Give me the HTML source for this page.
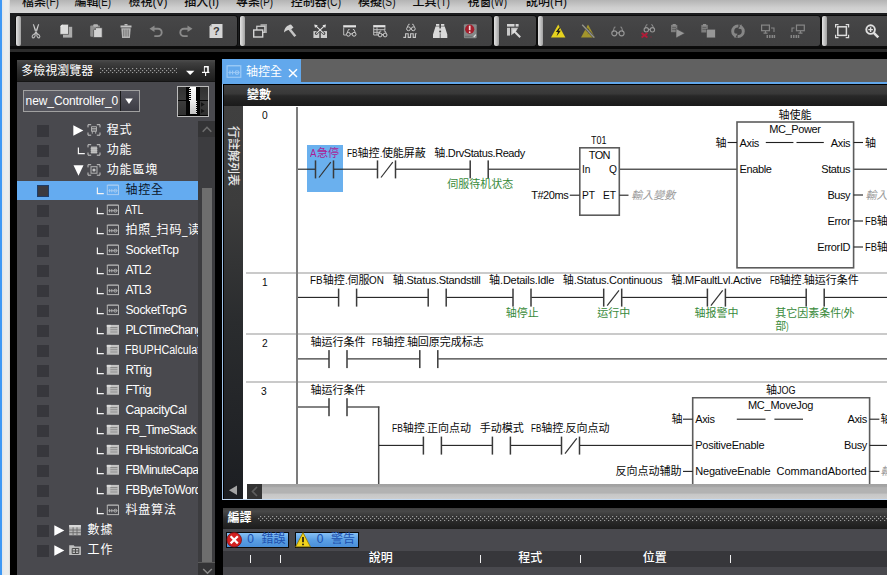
<!DOCTYPE html>
<html lang="zh-Hant"><head><meta charset="utf-8"><title>Sysmac Studio</title>
<style>
html,body{margin:0;padding:0}
body{width:887px;height:575px;overflow:hidden;position:relative;background:#000;font-family:"Liberation Sans","Noto Sans CJK TC","Noto Sans CJK SC",sans-serif;}
#r{position:absolute;left:0;top:0;width:887px;height:575px;overflow:hidden}
#r div{position:absolute;box-sizing:border-box}
.t{white-space:nowrap}
.c2{font-weight:500}.c3{font-weight:bold}
.x{display:inline-block;transform-origin:0 50%;white-space:nowrap;position:relative}
#ov{position:absolute;left:0;top:0}
</style></head><body>
<div id="r">
<div style="left:0px;top:0px;width:2.2px;height:575px;background:#3d98f4;"></div>
<div style="left:2.2px;top:0px;width:7.8px;height:575px;background:linear-gradient(90deg,#dfe6ec,#e9ecec 30%,#ebeded 80%,#d8dada);"></div>
<div style="left:10px;top:0px;width:877px;height:13px;background:linear-gradient(#b4b4b4,#cfcfcf 60%,#d6d6d6);"></div>
<div style="left:10px;top:13px;width:877px;height:47px;background:#1b1c1e;"></div>
<div style="left:10px;top:46px;width:877px;height:3px;background:#0a0a0a;"></div>
<div style="left:10px;top:49px;width:877px;height:3px;background:#2b2b2b;"></div>
<div style="left:10px;top:52px;width:877px;height:8px;background:#000;"></div>
<div style="left:10px;top:60px;width:7px;height:515px;background:#000;"></div>
<div style="left:16px;top:16px;width:221px;height:30px;background:linear-gradient(#474748,#424243 50%,#404041);border-radius:3px;box-shadow:0 0 0 1px #0c0c0c;"></div>
<div style="left:16px;top:16.2px;width:5.2px;height:29.6px;background:linear-gradient(90deg,#e2e2e2,#c4c4c4 50%,#a0a0a0);border-radius:2px;"></div>
<div style="left:240px;top:16px;width:252px;height:30px;background:linear-gradient(#474748,#424243 50%,#404041);border-radius:3px;box-shadow:0 0 0 1px #0c0c0c;"></div>
<div style="left:240px;top:16.2px;width:5.2px;height:29.6px;background:linear-gradient(90deg,#e2e2e2,#c4c4c4 50%,#a0a0a0);border-radius:2px;"></div>
<div style="left:494px;top:16px;width:42px;height:30px;background:linear-gradient(#474748,#424243 50%,#404041);border-radius:3px;box-shadow:0 0 0 1px #0c0c0c;"></div>
<div style="left:494px;top:16.2px;width:5.2px;height:29.6px;background:linear-gradient(90deg,#e2e2e2,#c4c4c4 50%,#a0a0a0);border-radius:2px;"></div>
<div style="left:538px;top:16px;width:282px;height:30px;background:linear-gradient(#474748,#424243 50%,#404041);border-radius:3px;box-shadow:0 0 0 1px #0c0c0c;"></div>
<div style="left:538px;top:16.2px;width:5.2px;height:29.6px;background:linear-gradient(90deg,#e2e2e2,#c4c4c4 50%,#a0a0a0);border-radius:2px;"></div>
<div style="left:822px;top:16px;width:80px;height:30px;background:linear-gradient(#474748,#424243 50%,#404041);border-radius:3px;box-shadow:0 0 0 1px #0c0c0c;"></div>
<div style="left:822px;top:16.2px;width:5.2px;height:29.6px;background:linear-gradient(90deg,#e2e2e2,#c4c4c4 50%,#a0a0a0);border-radius:2px;"></div>
<div style="left:17px;top:60px;width:198px;height:515px;background:#49494e;"></div>
<div style="left:17px;top:60px;width:198px;height:21px;background:linear-gradient(#4c4c4c,#3e3e3e 15%,#2e2e2e 50%,#1e1e1e);"></div>
<div style="left:17px;top:80.6px;width:198px;height:1.7px;background:#151515;"></div>
<div style="left:22.5px;top:90px;width:117px;height:22px;background:linear-gradient(#5c5c64,#54545c);border:1px solid #a0a0a0;"></div>
<div style="left:119.5px;top:91px;width:19.5px;height:20px;background:linear-gradient(#56565f,#3c3c44);border-left:1px solid #1a1a1a;"></div>
<div style="left:176.8px;top:85.8px;width:32.4px;height:31.2px;background:#050505;border:1px solid #bcbcbc;"></div>
<div style="left:178.2px;top:87.2px;width:8px;height:12.6px;background:linear-gradient(#303030,#3c3c3c);"></div>
<div style="left:178.2px;top:100.8px;width:8px;height:14px;background:linear-gradient(#3c3c3c,#303030);"></div>
<div style="left:199.9px;top:87.2px;width:8px;height:12.6px;background:linear-gradient(#303030,#3c3c3c);"></div>
<div style="left:199.9px;top:100.8px;width:8px;height:14px;background:linear-gradient(#3c3c3c,#303030);"></div>
<div style="left:190.4px;top:87px;width:5.2px;height:27.3px;background:linear-gradient(#ffffff,#ececec 55%,#c4c4c4);"></div>
<div style="left:189px;top:88px;width:1.6px;height:12.5px;background:repeating-linear-gradient(#f0f0f0 0 1px,#050505 1px 2px);"></div>
<div style="left:195.5px;top:101px;width:1.4px;height:12.5px;background:repeating-linear-gradient(#e0e0e0 0 1px,#050505 1px 2px);"></div>
<div style="left:17px;top:181px;width:181px;height:19px;background:#64abf0;"></div>
<div style="left:37px;top:125px;width:12px;height:12px;background:#37373c;"></div>
<div style="left:37px;top:145px;width:12px;height:12px;background:#37373c;"></div>
<div style="left:37px;top:165px;width:12px;height:12px;background:#37373c;"></div>
<div style="left:37px;top:185px;width:12px;height:12px;background:#3c3a3e;border:1px solid #1d3d6a;"></div>
<div style="left:37px;top:205px;width:12px;height:12px;background:#37373c;"></div>
<div style="left:37px;top:225px;width:12px;height:12px;background:#37373c;"></div>
<div style="left:37px;top:245px;width:12px;height:12px;background:#37373c;"></div>
<div style="left:37px;top:265px;width:12px;height:12px;background:#37373c;"></div>
<div style="left:37px;top:285px;width:12px;height:12px;background:#37373c;"></div>
<div style="left:37px;top:305px;width:12px;height:12px;background:#37373c;"></div>
<div style="left:37px;top:325px;width:12px;height:12px;background:#37373c;"></div>
<div style="left:37px;top:345px;width:12px;height:12px;background:#37373c;"></div>
<div style="left:37px;top:365px;width:12px;height:12px;background:#37373c;"></div>
<div style="left:37px;top:385px;width:12px;height:12px;background:#37373c;"></div>
<div style="left:37px;top:405px;width:12px;height:12px;background:#37373c;"></div>
<div style="left:37px;top:425px;width:12px;height:12px;background:#37373c;"></div>
<div style="left:37px;top:445px;width:12px;height:12px;background:#37373c;"></div>
<div style="left:37px;top:465px;width:12px;height:12px;background:#37373c;"></div>
<div style="left:37px;top:485px;width:12px;height:12px;background:#37373c;"></div>
<div style="left:37px;top:505px;width:12px;height:12px;background:#37373c;"></div>
<div style="left:37px;top:525px;width:12px;height:12px;background:#37373c;"></div>
<div style="left:37px;top:545px;width:12px;height:12px;background:#37373c;"></div>
<div style="left:198px;top:121px;width:17px;height:454px;background:#3c3c3f;"></div>
<div style="left:198px;top:121px;width:17px;height:16px;background:#343436;"></div>
<div style="left:198px;top:562px;width:17px;height:13px;background:#343436;"></div>
<div style="left:198px;top:562px;width:17px;height:1px;background:#5a5a5a;"></div>
<div style="left:202.3px;top:188px;width:9.5px;height:373.5px;background:#6e6e6e;"></div>
<div style="left:215px;top:60px;width:7px;height:515px;background:#000;"></div>
<div style="left:222px;top:59.4px;width:665px;height:23px;background:#616161;"></div>
<div style="left:222px;top:59.4px;width:79px;height:23.6px;background:#62a8ec;"></div>
<div style="left:222px;top:82px;width:665px;height:2.2px;background:#62a8ec;"></div>
<div style="left:222px;top:84px;width:665px;height:416px;background:#000;"></div>
<div style="left:222px;top:84px;width:1px;height:416px;background:#9fc3ea;"></div>
<div style="left:222px;top:498.8px;width:665px;height:1.6px;background:#c4daf2;"></div>
<div style="left:224px;top:85.3px;width:663px;height:20.7px;background:linear-gradient(#424242,#383838 42%,#282828 52%,#1a1a1a);"></div>
<div style="left:224px;top:106px;width:18.5px;height:393px;background:linear-gradient(#404040,#3c3c3c 25%,#2a2c2e 55%,#1c1e22);"></div>
<div style="left:242.5px;top:106px;width:644.5px;height:393px;background:#ffffff;"></div>
<div style="left:242.5px;top:484px;width:4.5px;height:15px;background:#fff;"></div>
<div style="left:247px;top:484px;width:640px;height:15px;background:linear-gradient(#a0a0a0,#a6a6a6 18%,#b2b2b2 25%,#b2b2b2 60%,#c6c6c6 68%,#cecece);"></div>
<div style="left:247px;top:484px;width:15px;height:15px;background:#333333;"></div>
<div style="left:246px;top:272.1px;width:641px;height:2px;background:#cacaca;"></div>
<div style="left:246px;top:333px;width:641px;height:2px;background:#cacaca;"></div>
<div style="left:246px;top:381px;width:641px;height:2px;background:#cacaca;"></div>
<div style="left:296.2px;top:107px;width:2px;height:377px;background:#7c7c7c;"></div>
<div style="left:307px;top:145px;width:36px;height:47px;background:#6ab0ee;"></div>
<div style="left:223px;top:508px;width:664px;height:67px;background:#49494e;"></div>
<div style="left:223px;top:508px;width:664px;height:20.5px;background:linear-gradient(#3c3c3c,#484848 15%,#2e2e2e 50%,#1c1c1c);"></div>
<div style="left:223px;top:551px;width:664px;height:16.2px;background:#37373b;"></div>
<div style="left:226px;top:532px;width:63px;height:16px;background:linear-gradient(#86c0f4,#5a9fe4 50%,#4a8fda);border:1px solid #0a0a0a;"></div>
<div style="left:295px;top:532px;width:64px;height:16px;background:linear-gradient(#86c0f4,#5a9fe4 50%,#4a8fda);border:1px solid #0a0a0a;"></div>
<div style="left:249.7px;top:554.5px;width:1.3px;height:8.5px;background:#f0f0f0;"></div>
<div style="left:279.6px;top:554.5px;width:1.3px;height:8.5px;background:#f0f0f0;"></div>
<div style="left:479.6px;top:554.5px;width:1.3px;height:8.5px;background:#f0f0f0;"></div>
<div style="left:579.7px;top:554.5px;width:1.3px;height:8.5px;background:#f0f0f0;"></div>
<div style="left:729.6px;top:554.5px;width:1.3px;height:8.5px;background:#f0f0f0;"></div>
<svg id="ov" width="887" height="575" viewBox="0 0 887 575" fill="none"><path d="M201 102.2L204.8 104.5L201 106.8ZM201 108.8L204.8 111L201 113.2Z" fill="#141414"/>
<defs><pattern id="dots" width="4" height="4" patternUnits="userSpaceOnUse"><rect x="0" y="0" width="1.2" height="1.2" fill="#9c9c9c"/><rect x="2" y="2" width="1.2" height="1.2" fill="#9c9c9c"/></pattern></defs>
<rect x="100" y="68" width="77" height="5.2" fill="url(#dots)"/>
<rect x="258" y="516" width="629" height="5.2" fill="url(#dots)"/>
<g transform="translate(32 24)" ><path d="M.8 0L2 .6L4.9 8.4L3.4 9Z M7.2 0L6 .6L3.1 8.4L4.6 9Z" fill="#cfcfcf"/><ellipse cx="1.7" cy="12" rx="1.25" ry="2" stroke="#b8b8b8" stroke-width="1.1" transform="rotate(32 1.7 12)"/><ellipse cx="6.3" cy="12" rx="1.25" ry="2" stroke="#b8b8b8" stroke-width="1.1" transform="rotate(-32 6.3 12)"/><path d="M4 8.2L2.7 10.2M4 8.2L5.3 10.2" stroke="#c0c0c0" stroke-width="1.5"/></g>
<g transform="translate(60 24.2)" ><rect x="3" y="2.6" width="9.2" height="10.8" fill="#acacac"/><path d="M0 2.4L2.4 0H8.5V10.2H0Z" fill="#dcdcdc" stroke="#434344" stroke-width=".7"/><path d="M0 2.4H2.4V0Z" fill="#f2f2f2"/></g>
<g transform="translate(90.2 24.2)" ><rect x="0" y="1.3" width="9.8" height="11.2" rx="1" fill="#909090"/><rect x="3" y="0" width="4.8" height="2.6" rx="1" fill="#b4b4b4"/><path d="M3.4 5.9L5.8 3.5H12V13.4H3.4Z" fill="#d2d2d2" stroke="#434344" stroke-width=".7"/><path d="M3.4 5.9H5.8V3.5Z" fill="#707070"/></g>
<g transform="translate(120.5 24)" ><rect x="4" y="0" width="3" height="1.5" fill="#bbb"/><rect x="0" y="1.5" width="11" height="2" fill="#c4c4c4"/><path d="M.8 4.2H10.2L9.4 14H1.6Z" fill="#b4b4b4"/><path d="M3.3 5.5V12.5M5.5 5.5V12.5M7.7 5.5V12.5" stroke="#6a6a6a" stroke-width=".9"/></g>
<g transform="translate(149.5 25.5)" ><path d="M0 3.2L5 0V6.4Z" fill="#8a8a8a"/><path d="M4.5 3.2H8.5A3.6 3.6 0 0 1 8.5 10.6H4.8" stroke="#8a8a8a" stroke-width="1.9"/></g>
<g transform="translate(179 25.5)" ><path d="M13.5 3.2L8.5 0V6.4Z" fill="#8a8a8a"/><path d="M9 3.2H5A3.6 3.6 0 0 0 5 10.6H8.7" stroke="#8a8a8a" stroke-width="1.9"/></g>
<g transform="translate(209.5 24)" ><path d="M0 2.5L2.5 0H13V14H0Z" fill="#d6d6d6"/><path d="M0 2.5H2.5V0" fill="#aaa"/></g>
<g transform="translate(253 24)" ><rect x="7.5" y="0" width="6.5" height="9" fill="#9a9a9a"/><rect x="3.8" y="2.3" width="8" height="6" fill="#434344" stroke="#c8c8c8" stroke-width="1.3"/><rect x=".7" y="6" width="9" height="7" fill="#434344" stroke="#d4d4d4" stroke-width="1.4"/></g>
<g transform="translate(283 24)" ><path d="M1 8.5C1.5 4 4 1.3 8 .6L10.5 3.5L7 6.2C5 5.6 3 6.5 1 8.5Z" fill="#d0d0d0"/><path d="M6.8 5.5L12.3 12.2" stroke="#c4c4c4" stroke-width="2.6"/></g>
<g transform="translate(313.4 24)" ><rect x="0" y="7.1" width="5.9" height="6.9" fill="#cdcdcd"/><rect x="7.4" y="7.1" width="6.2" height="6.9" fill="#cdcdcd"/><path d="M2.8 9.6L6.7 5.8M10.6 9.6L6.7 5.8" stroke="#434344" stroke-width="2.6"/><circle cx="2.8" cy="9.6" r="1.3" fill="#434344"/><circle cx="10.6" cy="9.6" r="1.3" fill="#434344"/><path d="M2.8 9.6L11 1.8M10.6 9.6L2.4 1.8" stroke="#e2e2e2" stroke-width="1.15"/><path d="M.8 .4L4.4 1.2L1.6 4Z M12.6 .4L9 1.2L11.8 4Z" fill="#e2e2e2"/></g>
<g transform="translate(343 24)" ><rect x=".2" y="1.2" width="12.8" height="2.2" fill="#e2e2e2"/><path d="M.7 3.4V11H3.4" stroke="#bcbcbc" stroke-width="1"/><circle cx="5.4" cy="10.3" r="1.9" stroke="#d0d0d0" stroke-width="1"/><circle cx="11.1" cy="10.3" r="1.9" stroke="#d0d0d0" stroke-width="1"/><path d="M7.3 9.9H9.2" stroke="#d0d0d0" stroke-width="1"/><path d="M4.2 8.7L5.5 5.5H6.6 M12.3 8.7L11 5.5H9.9" stroke="#d0d0d0" stroke-width=".9"/></g>
<g transform="translate(373 24)" ><rect x=".2" y="1.1" width="12.2" height="2.2" fill="#e2e2e2"/><path d="M.7 3.3V11H5M.7 5.7H12M.7 8.3H6.5M4 3.3V11M11.9 3.3V6.5" stroke="#bebebe" stroke-width="1"/><circle cx="7.1" cy="11" r="1.9" stroke="#d0d0d0" stroke-width="1"/><circle cx="12.1" cy="11" r="1.9" stroke="#d0d0d0" stroke-width="1"/><path d="M9 10.6H10.2" stroke="#d0d0d0" stroke-width="1"/><path d="M5.9 9.4L7.2 7H8.3 M13.3 9.4L12 7H10.9" stroke="#d0d0d0" stroke-width=".9"/></g>
<g transform="translate(403 24)" ><circle cx="5.5" cy="4.8" r="1.9" stroke="#c8c8c8" stroke-width="1"/><circle cx="10.3" cy="4.8" r="1.9" stroke="#c8c8c8" stroke-width="1"/><path d="M7.4 4.4H8.4" stroke="#c8c8c8" stroke-width="1"/><path d="M4.3 3.2L5.6 0.3H6.7 M11.5 3.2L10.2 0.3H9.1" stroke="#c8c8c8" stroke-width=".9"/><path d="M.3 13.4H2.6V9.7H5.2V13.4H7.6V9.7H10.2V13.4H12.4V9.7H13.6" stroke="#c8c8c8" stroke-width="1.1"/></g>
<g transform="translate(433 24)" ><path d="M3 0H6.3V2.2L6.8 9.4V14H0V10.4L2.6 2.2H3Z M11.3 0H8V2.2L7.5 9.4V14H14.3V10.4L11.7 2.2H11.3Z" fill="#d9d9d9"/><rect x="6" y="4.4" width="2.4" height="5" fill="#d2d2d2"/><circle cx="7.15" cy="7.6" r="1" fill="#3a3a3a"/><path d="M2.4 2.2H6.5M7.8 2.2H11.9" stroke="#434344" stroke-width=".55"/></g>
<g transform="translate(463.9 24.3)" ><rect x="0" y="0" width="12.8" height="14" rx="1" fill="#858888"/><circle cx="5.8" cy="4.9" r="4.6" fill="#a41e2c"/><path d="M5.8 1.4V5.9" stroke="#f2dede" stroke-width="1.7"/><circle cx="5.8" cy="7.9" r=".9" fill="#f2dede"/><path d="M1 12.2H8.6" stroke="#6e7474" stroke-width="1.3"/><path d="M9.8 12.8L12 10.4" stroke="#e4e4e4" stroke-width="1.1"/></g>
<g transform="translate(507 24)" ><rect x="0" y="0" width="7.5" height="2.6" fill="#d4d4d4"/><rect x="8.6" y="0" width="3" height="2.6" fill="#d4d4d4"/><rect x="0" y="3.8" width="3" height="7.8" fill="#c8c8c8"/><path d="M4.2 3.8H11.4L4.2 11.4Z" fill="#c4c4c4"/><path d="M7.5 7.5L13.2 13.2" stroke="#d8d8d8" stroke-width="2"/><path d="M5.5 10.5V5.5H10.5Z" fill="#e0e0e0"/></g>
<g transform="translate(551 24.5)" ><path d="M7.2 0L14.4 13H0Z" fill="#e6d21e"/><path d="M8.3 2.9L4.9 7.5H7L5.6 11.8L9.8 6.3H7.5L9.3 2.9Z" fill="#1a1a1a"/></g>
<g transform="translate(581 24.5)" ><path d="M7 0L14 13H0Z" fill="#a3952c"/><path d="M7.5 4L5.8 7.4H7.4L6.4 10.5L9 6.6H7.3L8.3 4Z" fill="#6c6424"/><path d="M1.2 .2L13.2 12.9" stroke="#434344" stroke-width="2.6"/><path d="M1.2 .2L13.2 12.9" stroke="#94948a" stroke-width="1.4"/></g>
<g transform="translate(611 25)" ><circle cx="3.3" cy="8.3" r="2.5" stroke="#969696" stroke-width="1.15"/><circle cx="10.6" cy="8.3" r="2.5" stroke="#969696" stroke-width="1.15"/><path d="M5.8 7.9H8.1" stroke="#969696" stroke-width="1.15"/><path d="M2.1 6.7L3.4 2.1H4.5 M11.8 6.7L10.5 2.1H9.4" stroke="#969696" stroke-width=".9"/></g>
<g transform="translate(641 24)" ><circle cx="5.3" cy="5.8" r="2.2" stroke="#969696" stroke-width="1.1"/><circle cx="11.4" cy="5.8" r="2.2" stroke="#969696" stroke-width="1.1"/><path d="M7.5 5.4H9.2" stroke="#969696" stroke-width="1.1"/><path d="M4.1 4.2L5.4 0.8H6.5 M12.6 4.2L11.3 0.8H10.2" stroke="#969696" stroke-width=".9"/><path d="M.6 8.9L6.4 13.6M6.4 8.9L.6 13.6" stroke="#b01c38" stroke-width="1.9"/><path d="M9.2 13H10.8" stroke="#7a3040" stroke-width="1"/></g>
<g transform="translate(671 24)" ><rect x="0" y=".9" width="6.3" height="7.3" fill="#7e7e7e"/><rect x="1.6" y="0" width="3.2" height="1.8" fill="#8e8e8e"/><path d="M1.2 3.5H5M1.2 5.5H5" stroke="#5c5c5c" stroke-width=".8"/><path d="M5 4.6L13.9 9.3L5 14Z" fill="#979797" stroke="#434344" stroke-width=".6"/></g>
<g transform="translate(701 24)" ><rect x=".3" y=".9" width="6.5" height="7.6" fill="#7e7e7e"/><rect x="2" y="0" width="3.2" height="1.8" fill="#8e8e8e"/><path d="M1.5 3.5H5.4M1.5 5.5H5.4" stroke="#5c5c5c" stroke-width=".8"/><rect x="5.5" y="5.2" width="8.8" height="8.7" fill="#979797" stroke="#434344" stroke-width=".6"/></g>
<g transform="translate(731 24.3)" ><circle cx="7" cy="6.9" r="5.3" stroke="#868686" stroke-width="3"/><path d="M7.6 -.6L10.2 3.6L7.2 4.6Z M6.4 14.4L3.8 10.2L6.8 9.2Z" fill="#434344"/><path d="M10.2 -.2L11.6 4.9L7.4 4.4Z M3.8 14L2.4 8.9L6.6 9.4Z" fill="#868686"/></g>
<g transform="translate(761 24.5)" ><rect x=".6" y=".6" width="7.8" height="5.6" stroke="#868686" stroke-width="1.2"/><path d="M2.5 8.6H6.5M4.5 6.5V8.6" stroke="#868686" stroke-width="1.2"/><path d="M10 3.5H13V7.5" stroke="#868686" stroke-width="1.1"/><path d="M6.3 10.4V13.5M8.8 10.4V13.5M11.3 10.4V13.5M13.4 10.4V13.5" stroke="#868686" stroke-width="1.5"/></g>
<g transform="translate(790.5 24.5)" ><rect x="6" y=".6" width="7.8" height="5.6" stroke="#868686" stroke-width="1.2"/><path d="M8 8.6H12M10 6.5V8.6" stroke="#868686" stroke-width="1.2"/><path d="M1.5 7.5V3.5H4" stroke="#868686" stroke-width="1.1"/><path d="M.8 10.4V13.5M3.3 10.4V13.5M5.8 10.4V13.5M8 10.4V13.5" stroke="#868686" stroke-width="1.5"/></g>
<g transform="translate(835 24)" ><rect x="2.8" y="2.8" width="8.6" height="8.6" stroke="#dcdcdc" stroke-width="1.5"/><path d="M.6 3.5V.6H3.5M10.7 .6H13.6V3.5M13.6 10.7V13.6H10.7M3.5 13.6H.6V10.7" stroke="#dcdcdc" stroke-width="1.2"/></g>
<g transform="translate(865 24)" ><circle cx="5.6" cy="5.6" r="4.3" stroke="#e0e0e0" stroke-width="1.9"/><path d="M3.3 5.6H7.9M5.6 3.3V7.9" stroke="#e0e0e0" stroke-width="1.4"/><path d="M8.8 8.8L13.3 13.3" stroke="#e0e0e0" stroke-width="2.6"/></g>
<path d="M186 70.8H194.4L190.2 75Z" fill="#fff"/>
<path d="M204 66.8H208V72" stroke="#fff" stroke-width="1.6"/><path d="M204.4 66.8V72" stroke="#fff" stroke-width=".9"/><path d="M202 72.4H209.4" stroke="#fff" stroke-width="1.2"/><path d="M205.6 73V76" stroke="#fff" stroke-width="1.1"/>
<path d="M125.2 98.6H132.8L129 104Z" fill="#fff"/>
<path d="M202.7 131.8L207 127.3L211.3 131.8" stroke="#6e6e6e" stroke-width="1.6"/>
<path d="M203.2 569L207.5 573.2L211.8 569" stroke="#8a8a8a" stroke-width="1.5"/>
<path d="M257 487L252.5 491.5L257 496" stroke="#5e5e5e" stroke-width="1.6"/>
<path d="M237 485.5V495L229 490.2Z" fill="#a4a4a4"/>
<path d="M73.3 125.2V135.8L83.3 130.5Z" fill="#fff"/>
<g transform="translate(88 124.2)" ><path d="M0 3.2V.5H3.2M8.8 .5H12V3.2M12 8.3V11H8.8M3.2 11H0V8.3" stroke="#c4c4c4" stroke-width="1"/><path d="M3.5 2.5H8.5V7.2H3.5ZM3.5 4.2H8.5M3.5 5.8H8.5M4.3 7.2V9.5M7.7 7.2V9.5" stroke="#b4b4b4" stroke-width=".9"/></g>
<path d="M78.4 147.4V153.7H84.8" stroke="#f4f4f4" stroke-width="1.2"/>
<g transform="translate(88 144.2)" ><path d="M0 3.2V.5H3.2M8.8 .5H12V3.2M12 8.3V11H8.8M3.2 11H0V8.3" stroke="#c4c4c4" stroke-width="1"/><rect x="3" y="2.3" width="6" height="7" fill="#aaa"/><path d="M2.5 4H9.5M2.5 6H9.5M2.5 8H9.5" stroke="#d4d4d4" stroke-width=".8"/></g>
<path d="M73.5 165.2H83.5L78.5 175.7Z" fill="#fff"/>
<g transform="translate(88 164.2)" ><path d="M0 3.2V.5H3.2M8.8 .5H12V3.2M12 8.3V11H8.8M3.2 11H0V8.3" stroke="#c4c4c4" stroke-width="1"/><rect x="3" y="2.5" width="6" height="6.5" stroke="#b4b4b4" stroke-width="1"/><circle cx="6" cy="5.8" r="1.6" fill="#c4c4c4"/></g>
<path d="M97.4 187.4V193.7H103.8" stroke="#f4f4f4" stroke-width="1.2"/>
<g transform="translate(106.8 184.7)" ><rect x=".5" y=".5" width="11.2" height="9.4" stroke="#a9cdf2" stroke-width="1"/><path d="M1 .3H11.2" stroke="#a9cdf2" stroke-width=".7"/><path d="M1.5 6H10.7" stroke="#a9cdf2" stroke-width=".8"/><path d="M2.8 4.4V7.6M5 4.4V7.6" stroke="#a9cdf2" stroke-width="1"/><circle cx="8.6" cy="6" r="1.5" fill="none" stroke="#a9cdf2" stroke-width=".9"/></g>
<path d="M97.4 207.4V213.7H103.8" stroke="#f4f4f4" stroke-width="1.2"/>
<g transform="translate(106.8 204.7)" ><rect x=".5" y=".5" width="11.2" height="9.4" stroke="#b4b4b4" stroke-width="1"/><path d="M1 .3H11.2" stroke="#b4b4b4" stroke-width=".7"/><path d="M1.5 6H10.7" stroke="#b4b4b4" stroke-width=".8"/><path d="M2.8 4.4V7.6M5 4.4V7.6" stroke="#b4b4b4" stroke-width="1"/><circle cx="8.6" cy="6" r="1.5" fill="none" stroke="#b4b4b4" stroke-width=".9"/></g>
<path d="M97.4 227.4V233.7H103.8" stroke="#f4f4f4" stroke-width="1.2"/>
<g transform="translate(106.8 224.7)" ><rect x=".5" y=".5" width="11.2" height="9.4" stroke="#b4b4b4" stroke-width="1"/><path d="M1 .3H11.2" stroke="#b4b4b4" stroke-width=".7"/><path d="M1.5 6H10.7" stroke="#b4b4b4" stroke-width=".8"/><path d="M2.8 4.4V7.6M5 4.4V7.6" stroke="#b4b4b4" stroke-width="1"/><circle cx="8.6" cy="6" r="1.5" fill="none" stroke="#b4b4b4" stroke-width=".9"/></g>
<path d="M97.4 247.4V253.7H103.8" stroke="#f4f4f4" stroke-width="1.2"/>
<g transform="translate(106.8 244.7)" ><rect x=".5" y=".5" width="11.2" height="9.4" stroke="#b4b4b4" stroke-width="1"/><path d="M1 .3H11.2" stroke="#b4b4b4" stroke-width=".7"/><path d="M1.5 6H10.7" stroke="#b4b4b4" stroke-width=".8"/><path d="M2.8 4.4V7.6M5 4.4V7.6" stroke="#b4b4b4" stroke-width="1"/><circle cx="8.6" cy="6" r="1.5" fill="none" stroke="#b4b4b4" stroke-width=".9"/></g>
<path d="M97.4 267.4V273.7H103.8" stroke="#f4f4f4" stroke-width="1.2"/>
<g transform="translate(106.8 264.7)" ><rect x=".5" y=".5" width="11.2" height="9.4" stroke="#b4b4b4" stroke-width="1"/><path d="M1 .3H11.2" stroke="#b4b4b4" stroke-width=".7"/><path d="M1.5 6H10.7" stroke="#b4b4b4" stroke-width=".8"/><path d="M2.8 4.4V7.6M5 4.4V7.6" stroke="#b4b4b4" stroke-width="1"/><circle cx="8.6" cy="6" r="1.5" fill="none" stroke="#b4b4b4" stroke-width=".9"/></g>
<path d="M97.4 287.4V293.7H103.8" stroke="#f4f4f4" stroke-width="1.2"/>
<g transform="translate(106.8 284.7)" ><rect x=".5" y=".5" width="11.2" height="9.4" stroke="#b4b4b4" stroke-width="1"/><path d="M1 .3H11.2" stroke="#b4b4b4" stroke-width=".7"/><path d="M1.5 6H10.7" stroke="#b4b4b4" stroke-width=".8"/><path d="M2.8 4.4V7.6M5 4.4V7.6" stroke="#b4b4b4" stroke-width="1"/><circle cx="8.6" cy="6" r="1.5" fill="none" stroke="#b4b4b4" stroke-width=".9"/></g>
<path d="M97.4 307.4V313.7H103.8" stroke="#f4f4f4" stroke-width="1.2"/>
<g transform="translate(106.8 304.7)" ><rect x=".5" y=".5" width="11.2" height="9.4" stroke="#b4b4b4" stroke-width="1"/><path d="M1 .3H11.2" stroke="#b4b4b4" stroke-width=".7"/><path d="M1.5 6H10.7" stroke="#b4b4b4" stroke-width=".8"/><path d="M2.8 4.4V7.6M5 4.4V7.6" stroke="#b4b4b4" stroke-width="1"/><circle cx="8.6" cy="6" r="1.5" fill="none" stroke="#b4b4b4" stroke-width=".9"/></g>
<path d="M97.4 327.4V333.7H103.8" stroke="#f4f4f4" stroke-width="1.2"/>
<g transform="translate(106.8 324.9)" ><rect x="0" y="0" width="12.2" height="10" fill="#c2c2c2"/><rect x="0" y="0" width="4" height="2" fill="#dcdcdc"/><path d="M3.5 2.7H10.7M3.5 4.9H10.7M3.5 7.1H10.7" stroke="#8a8a8a" stroke-width="1.1"/><path d="M0 9.5H12.2" stroke="#9a9a9a" stroke-width="1"/></g>
<path d="M97.4 347.4V353.7H103.8" stroke="#f4f4f4" stroke-width="1.2"/>
<g transform="translate(106.8 344.9)" ><rect x="0" y="0" width="12.2" height="10" fill="#c2c2c2"/><rect x="0" y="0" width="4" height="2" fill="#dcdcdc"/><path d="M3.5 2.7H10.7M3.5 4.9H10.7M3.5 7.1H10.7" stroke="#8a8a8a" stroke-width="1.1"/><path d="M0 9.5H12.2" stroke="#9a9a9a" stroke-width="1"/></g>
<path d="M97.4 367.4V373.7H103.8" stroke="#f4f4f4" stroke-width="1.2"/>
<g transform="translate(106.8 364.9)" ><rect x="0" y="0" width="12.2" height="10" fill="#c2c2c2"/><rect x="0" y="0" width="4" height="2" fill="#dcdcdc"/><path d="M3.5 2.7H10.7M3.5 4.9H10.7M3.5 7.1H10.7" stroke="#8a8a8a" stroke-width="1.1"/><path d="M0 9.5H12.2" stroke="#9a9a9a" stroke-width="1"/></g>
<path d="M97.4 387.4V393.7H103.8" stroke="#f4f4f4" stroke-width="1.2"/>
<g transform="translate(106.8 384.9)" ><rect x="0" y="0" width="12.2" height="10" fill="#c2c2c2"/><rect x="0" y="0" width="4" height="2" fill="#dcdcdc"/><path d="M3.5 2.7H10.7M3.5 4.9H10.7M3.5 7.1H10.7" stroke="#8a8a8a" stroke-width="1.1"/><path d="M0 9.5H12.2" stroke="#9a9a9a" stroke-width="1"/></g>
<path d="M97.4 407.4V413.7H103.8" stroke="#f4f4f4" stroke-width="1.2"/>
<g transform="translate(106.8 404.9)" ><rect x="0" y="0" width="12.2" height="10" fill="#c2c2c2"/><rect x="0" y="0" width="4" height="2" fill="#dcdcdc"/><path d="M3.5 2.7H10.7M3.5 4.9H10.7M3.5 7.1H10.7" stroke="#8a8a8a" stroke-width="1.1"/><path d="M0 9.5H12.2" stroke="#9a9a9a" stroke-width="1"/></g>
<path d="M97.4 427.4V433.7H103.8" stroke="#f4f4f4" stroke-width="1.2"/>
<g transform="translate(106.8 424.9)" ><rect x="0" y="0" width="12.2" height="10" fill="#c2c2c2"/><rect x="0" y="0" width="4" height="2" fill="#dcdcdc"/><path d="M3.5 2.7H10.7M3.5 4.9H10.7M3.5 7.1H10.7" stroke="#8a8a8a" stroke-width="1.1"/><path d="M0 9.5H12.2" stroke="#9a9a9a" stroke-width="1"/></g>
<path d="M97.4 447.4V453.7H103.8" stroke="#f4f4f4" stroke-width="1.2"/>
<g transform="translate(106.8 444.9)" ><rect x="0" y="0" width="12.2" height="10" fill="#c2c2c2"/><rect x="0" y="0" width="4" height="2" fill="#dcdcdc"/><path d="M3.5 2.7H10.7M3.5 4.9H10.7M3.5 7.1H10.7" stroke="#8a8a8a" stroke-width="1.1"/><path d="M0 9.5H12.2" stroke="#9a9a9a" stroke-width="1"/></g>
<path d="M97.4 467.4V473.7H103.8" stroke="#f4f4f4" stroke-width="1.2"/>
<g transform="translate(106.8 464.9)" ><rect x="0" y="0" width="12.2" height="10" fill="#c2c2c2"/><rect x="0" y="0" width="4" height="2" fill="#dcdcdc"/><path d="M3.5 2.7H10.7M3.5 4.9H10.7M3.5 7.1H10.7" stroke="#8a8a8a" stroke-width="1.1"/><path d="M0 9.5H12.2" stroke="#9a9a9a" stroke-width="1"/></g>
<path d="M97.4 487.4V493.7H103.8" stroke="#f4f4f4" stroke-width="1.2"/>
<g transform="translate(106.8 484.9)" ><rect x="0" y="0" width="12.2" height="10" fill="#c2c2c2"/><rect x="0" y="0" width="4" height="2" fill="#dcdcdc"/><path d="M3.5 2.7H10.7M3.5 4.9H10.7M3.5 7.1H10.7" stroke="#8a8a8a" stroke-width="1.1"/><path d="M0 9.5H12.2" stroke="#9a9a9a" stroke-width="1"/></g>
<path d="M97.4 507.4V513.7H103.8" stroke="#f4f4f4" stroke-width="1.2"/>
<g transform="translate(106.8 504.7)" ><rect x=".5" y=".5" width="11.2" height="9.4" stroke="#b4b4b4" stroke-width="1"/><path d="M1 .3H11.2" stroke="#b4b4b4" stroke-width=".7"/><path d="M1.5 6H10.7" stroke="#b4b4b4" stroke-width=".8"/><path d="M2.8 4.4V7.6M5 4.4V7.6" stroke="#b4b4b4" stroke-width="1"/><circle cx="8.6" cy="6" r="1.5" fill="none" stroke="#b4b4b4" stroke-width=".9"/></g>
<path d="M54.3 525.2V535.8L64.3 530.5Z" fill="#fff"/>
<g transform="translate(69.2 525)" ><rect x="0" y="0" width="11.7" height="10.3" fill="#b8b8b8"/><rect x="0" y="0" width="11.7" height="2.3" fill="#d8d8d8"/><path d="M0 5H11.7M0 7.7H11.7M3.9 2.3V10.3M7.8 2.3V10.3" stroke="#6a6a6a" stroke-width=".9"/></g>
<path d="M54.3 545.2V555.8L64.3 550.5Z" fill="#fff"/>
<g transform="translate(69.2 544.3)" ><path d="M0 1H4.5L5.5 2.3H11.7V10.7H0Z" fill="#c0c0c0"/><path d="M3 4.2H9.6V9.2H3ZM6.3 4.2V9.2M3 6.7H9.6" stroke="#4a4a4a" stroke-width="1"/></g>
<g transform="translate(226.5 65.2)" style="transform:translate(226.5px,65.2px) scale(1.22)"><rect x=".5" y=".5" width="11.2" height="9.4" stroke="#9ccaf6" stroke-width="1"/><path d="M1 .3H11.2" stroke="#9ccaf6" stroke-width=".7"/><path d="M1.5 6H10.7" stroke="#9ccaf6" stroke-width=".8"/><path d="M2.8 4.4V7.6M5 4.4V7.6" stroke="#9ccaf6" stroke-width="1"/><circle cx="8.6" cy="6" r="1.5" fill="none" stroke="#9ccaf6" stroke-width=".9"/></g>
<path d="M289 69.3L297 77M297 69.3L289 77" stroke="#fff" stroke-width="1.5"/>
<rect x="298" y="168.65" width="17.5" height="1.1" fill="#202020"/>
<rect x="314.75" y="160.4" width="1.5" height="18" fill="#3a3a3a"/>
<rect x="332.75" y="160.4" width="1.5" height="18" fill="#3a3a3a"/>
<path d="M319 177.5L330.8 162.2" stroke="#333" stroke-width="1.2"/>
<rect x="334" y="168.65" width="43.5" height="1.1" fill="#202020"/>
<rect x="376.75" y="160.4" width="1.5" height="18" fill="#3a3a3a"/>
<rect x="394.75" y="160.4" width="1.5" height="18" fill="#3a3a3a"/>
<path d="M381 177.5L392.8 162.2" stroke="#333" stroke-width="1.2"/>
<rect x="396" y="168.65" width="74.2" height="1.1" fill="#202020"/>
<rect x="469.45" y="160.4" width="1.5" height="18" fill="#3a3a3a"/>
<rect x="487.45" y="160.4" width="1.5" height="18" fill="#3a3a3a"/>
<rect x="488.7" y="168.65" width="90.8" height="1.1" fill="#202020"/>
<rect x="619.5" y="168.65" width="117.5" height="1.1" fill="#202020"/>
<rect x="853.5" y="168.65" width="33.5" height="1.1" fill="#202020"/>
<rect x="579.8" y="147.8" width="39.5" height="67.4" stroke="#5c5c5c" stroke-width="1.6"/>
<rect x="569.8" y="194.65" width="9.7" height="1.1" fill="#202020"/>
<rect x="619.5" y="194.65" width="9" height="1.1" fill="#202020"/>
<rect x="737" y="122" width="116.6" height="145.8" stroke="#5c5c5c" stroke-width="1.6"/>
<rect x="765.8" y="141.95" width="27.6" height="1.1" fill="#202020"/>
<rect x="796.5" y="141.95" width="27.3" height="1.1" fill="#202020"/>
<rect x="727.6" y="141.95" width="9.4" height="1.1" fill="#202020"/>
<rect x="853.6" y="141.95" width="9.4" height="1.1" fill="#202020"/>
<rect x="853.6" y="194.45" width="9.4" height="1.1" fill="#202020"/>
<rect x="853.6" y="220.45" width="9.4" height="1.1" fill="#202020"/>
<rect x="853.6" y="246.45" width="9.4" height="1.1" fill="#202020"/>
<rect x="298" y="296.85" width="40.6" height="1.1" fill="#202020"/>
<rect x="337.85" y="288.6" width="1.5" height="18" fill="#3a3a3a"/>
<rect x="355.85" y="288.6" width="1.5" height="18" fill="#3a3a3a"/>
<rect x="357.1" y="296.85" width="71.1" height="1.1" fill="#202020"/>
<rect x="427.45" y="288.6" width="1.5" height="18" fill="#3a3a3a"/>
<rect x="445.45" y="288.6" width="1.5" height="18" fill="#3a3a3a"/>
<rect x="446.7" y="296.85" width="66.3" height="1.1" fill="#202020"/>
<rect x="512.25" y="288.6" width="1.5" height="18" fill="#3a3a3a"/>
<rect x="530.25" y="288.6" width="1.5" height="18" fill="#3a3a3a"/>
<rect x="531.5" y="296.85" width="72.2" height="1.1" fill="#202020"/>
<rect x="602.95" y="288.6" width="1.5" height="18" fill="#3a3a3a"/>
<rect x="620.95" y="288.6" width="1.5" height="18" fill="#3a3a3a"/>
<path d="M607.2 305.7L619 290.4" stroke="#333" stroke-width="1.2"/>
<rect x="622.2" y="296.85" width="85.2" height="1.1" fill="#202020"/>
<rect x="706.65" y="288.6" width="1.5" height="18" fill="#3a3a3a"/>
<rect x="724.65" y="288.6" width="1.5" height="18" fill="#3a3a3a"/>
<path d="M710.9 305.7L722.7 290.4" stroke="#333" stroke-width="1.2"/>
<rect x="725.9" y="296.85" width="80.3" height="1.1" fill="#202020"/>
<rect x="805.45" y="288.6" width="1.5" height="18" fill="#3a3a3a"/>
<rect x="823.45" y="288.6" width="1.5" height="18" fill="#3a3a3a"/>
<rect x="824.7" y="296.85" width="62.3" height="1.1" fill="#202020"/>
<rect x="298" y="358.35" width="31" height="1.1" fill="#202020"/>
<rect x="328.25" y="350.1" width="1.5" height="18" fill="#3a3a3a"/>
<rect x="346.25" y="350.1" width="1.5" height="18" fill="#3a3a3a"/>
<rect x="347.5" y="358.35" width="72.3" height="1.1" fill="#202020"/>
<rect x="419.05" y="350.1" width="1.5" height="18" fill="#3a3a3a"/>
<rect x="437.05" y="350.1" width="1.5" height="18" fill="#3a3a3a"/>
<rect x="438.3" y="358.35" width="448.7" height="1.1" fill="#202020"/>
<rect x="298" y="406.45" width="31" height="1.1" fill="#202020"/>
<rect x="328.25" y="398.2" width="1.5" height="18" fill="#3a3a3a"/>
<rect x="346.25" y="398.2" width="1.5" height="18" fill="#3a3a3a"/>
<rect x="347.5" y="406.45" width="31.9" height="1.1" fill="#202020"/>
<rect x="377.95" y="406.5" width="1.5" height="77.5" fill="#4a4a4a"/>
<rect x="379" y="444.85" width="44.4" height="1.1" fill="#202020"/>
<rect x="422.65" y="436.6" width="1.5" height="18" fill="#3a3a3a"/>
<rect x="440.65" y="436.6" width="1.5" height="18" fill="#3a3a3a"/>
<rect x="441.9" y="444.85" width="50.5" height="1.1" fill="#202020"/>
<rect x="491.65" y="436.6" width="1.5" height="18" fill="#3a3a3a"/>
<rect x="509.65" y="436.6" width="1.5" height="18" fill="#3a3a3a"/>
<rect x="510.9" y="444.85" width="50.6" height="1.1" fill="#202020"/>
<rect x="560.75" y="436.6" width="1.5" height="18" fill="#3a3a3a"/>
<rect x="578.75" y="436.6" width="1.5" height="18" fill="#3a3a3a"/>
<path d="M565 453.7L576.8 438.4" stroke="#333" stroke-width="1.2"/>
<rect x="580" y="444.85" width="112.5" height="1.1" fill="#202020"/>
<path d="M692.7 484V397.8H869.6V484" stroke="#5c5c5c" stroke-width="1.6"/>
<rect x="736.8" y="418.65" width="28.7" height="1.1" fill="#202020"/>
<rect x="774.4" y="418.65" width="28.6" height="1.1" fill="#202020"/>
<rect x="683" y="418.65" width="9.7" height="1.1" fill="#202020"/>
<rect x="683" y="470.85" width="9.7" height="1.1" fill="#202020"/>
<rect x="869.6" y="418.65" width="9.8" height="1.1" fill="#202020"/>
<rect x="869.6" y="444.85" width="17.4" height="1.1" fill="#202020"/>
<rect x="869.6" y="470.85" width="9.8" height="1.1" fill="#202020"/>
<circle cx="234.2" cy="539.8" r="7.3" fill="#d42020" stroke="#7a0c0c" stroke-width=".8"/><path d="M230.6 536.2L237.8 543.4M237.8 536.2L230.6 543.4" stroke="#fff" stroke-width="2.2"/>
<path d="M303 532.6L310.4 546.8H295.6Z" fill="#f2d21c" stroke="#8a7400" stroke-width=".8"/><path d="M303 537V542.3" stroke="#111" stroke-width="1.6"/><circle cx="303" cy="544.4" r=".9" fill="#111"/></svg>
<div style="left:17px;top:118px;width:181px;height:457px;overflow:hidden">
<div class="t" style="top:3.64px;height:17px;line-height:17px;font-size:12px;color:#fff;left:89.70px;"><span style="letter-spacing:0.85px">程式</span></div>
<div class="t" style="top:23.64px;height:17px;line-height:17px;font-size:12px;color:#fff;left:89.70px;"><span style="letter-spacing:0.85px">功能</span></div>
<div class="t" style="top:43.64px;height:17px;line-height:17px;font-size:12px;color:#fff;left:89.70px;"><span style="letter-spacing:0.85px">功能區塊</span></div>
<div class="t" style="top:63.64px;height:17px;line-height:17px;font-size:12px;color:#0a1428;left:108.40px;"><span style="letter-spacing:0.85px">轴控全</span></div>
<div class="t" style="top:83.64px;height:17px;line-height:17px;font-size:12px;color:#fff;left:108.40px;"><span class="x" style="width:19.10px;transform:scaleX(0.8679)">ATL</span></div>
<div class="t" style="top:103.64px;height:17px;line-height:17px;font-size:12px;color:#fff;left:108.40px;"><span style="letter-spacing:0.85px">拍照</span><span class="x" style="width:5.45px;transform:scaleX(0.8166)">_</span><span style="letter-spacing:0.85px">扫码</span><span class="x" style="width:5.45px;transform:scaleX(0.8166)">_</span><span style="letter-spacing:0.85px">读取</span></div>
<div class="t" style="top:123.64px;height:17px;line-height:17px;font-size:12px;color:#fff;left:108.40px;"><span style="letter-spacing:-0.243px">SocketTcp</span></div>
<div class="t" style="top:143.64px;height:17px;line-height:17px;font-size:12px;color:#fff;left:108.40px;"><span style="letter-spacing:-0.545px">ATL2</span></div>
<div class="t" style="top:163.64px;height:17px;line-height:17px;font-size:12px;color:#fff;left:108.40px;"><span style="letter-spacing:-0.545px">ATL3</span></div>
<div class="t" style="top:183.64px;height:17px;line-height:17px;font-size:12px;color:#fff;left:108.40px;"><span style="letter-spacing:-0.342px">SocketTcpG</span></div>
<div class="t" style="top:203.64px;height:17px;line-height:17px;font-size:12px;color:#fff;left:108.40px;"><span style="letter-spacing:-0.666px">PLCTimeChange</span></div>
<div class="t" style="top:223.64px;height:17px;line-height:17px;font-size:12px;color:#fff;left:108.40px;"><span class="x" style="width:81.15px;transform:scaleX(0.8948)">FBUPHCalculate</span></div>
<div class="t" style="top:243.64px;height:17px;line-height:17px;font-size:12px;color:#fff;left:108.40px;"><span style="letter-spacing:-0.506px">RTrig</span></div>
<div class="t" style="top:263.64px;height:17px;line-height:17px;font-size:12px;color:#fff;left:108.40px;"><span style="letter-spacing:-0.399px">FTrig</span></div>
<div class="t" style="top:283.64px;height:17px;line-height:17px;font-size:12px;color:#fff;left:108.40px;"><span style="letter-spacing:-0.308px">CapacityCal</span></div>
<div class="t" style="top:303.64px;height:17px;line-height:17px;font-size:12px;color:#fff;left:108.40px;"><span style="letter-spacing:-0.640px">FB_TimeStack</span></div>
<div class="t" style="top:323.64px;height:17px;line-height:17px;font-size:12px;color:#fff;left:108.40px;"><span style="letter-spacing:-0.523px">FBHistoricalCapacity</span></div>
<div class="t" style="top:343.64px;height:17px;line-height:17px;font-size:12px;color:#fff;left:108.40px;"><span style="letter-spacing:-0.592px">FBMinuteCapacity</span></div>
<div class="t" style="top:363.64px;height:17px;line-height:17px;font-size:12px;color:#fff;left:108.40px;"><span style="letter-spacing:-0.394px">FBByteToWord</span></div>
<div class="t" style="top:383.64px;height:17px;line-height:17px;font-size:12px;color:#fff;left:108.40px;"><span style="letter-spacing:0.85px">料盘算法</span></div>
<div class="t" style="top:403.64px;height:17px;line-height:17px;font-size:12px;color:#fff;left:70.60px;"><span style="letter-spacing:0.85px">數據</span></div>
<div class="t" style="top:423.64px;height:17px;line-height:17px;font-size:12px;color:#fff;left:70.60px;"><span style="letter-spacing:0.85px">工作</span></div>
</div>
<div class="t" style="top:-6.36px;height:17px;line-height:17px;font-size:12px;color:#0c0c0c;left:22.00px;"><span class="c2">檔案</span><span class="x" style="width:13.00px;transform:scaleX(0.8484)">(F)</span></div>
<div class="t" style="top:-6.36px;height:17px;line-height:17px;font-size:12px;color:#0c0c0c;left:74.40px;"><span class="c2">編輯</span><span class="x" style="width:13.00px;transform:scaleX(0.8127)">(E)</span></div>
<div class="t" style="top:-6.36px;height:17px;line-height:17px;font-size:12px;color:#0c0c0c;left:128.50px;"><span class="c2">檢視</span><span style="letter-spacing:-0.499px">(V)</span></div>
<div class="t" style="top:-6.36px;height:17px;line-height:17px;font-size:12px;color:#0c0c0c;left:184.30px;"><span class="c2">插入</span><span style="letter-spacing:-0.275px">(I)</span></div>
<div class="t" style="top:-6.36px;height:17px;line-height:17px;font-size:12px;color:#0c0c0c;left:236.00px;"><span class="c2">專案</span><span class="x" style="width:13.00px;transform:scaleX(0.8127)">(P)</span></div>
<div class="t" style="top:-6.36px;height:17px;line-height:17px;font-size:12px;color:#0c0c0c;left:290.80px;"><span class="c2">控制器</span><span class="x" style="width:14.00px;transform:scaleX(0.8404)">(C)</span></div>
<div class="t" style="top:-6.36px;height:17px;line-height:17px;font-size:12px;color:#0c0c0c;left:358.00px;"><span class="c2">模擬</span><span class="x" style="width:13.50px;transform:scaleX(0.8440)">(S)</span></div>
<div class="t" style="top:-6.36px;height:17px;line-height:17px;font-size:12px;color:#0c0c0c;left:412.60px;"><span class="c2">工具</span><span class="x" style="width:13.00px;transform:scaleX(0.8484)">(T)</span></div>
<div class="t" style="top:-6.36px;height:17px;line-height:17px;font-size:12px;color:#0c0c0c;left:467.40px;"><span class="c2">視窗</span><span class="x" style="width:16.00px;transform:scaleX(0.8282)">(W)</span></div>
<div class="t" style="top:-6.36px;height:17px;line-height:17px;font-size:12px;color:#0c0c0c;left:526.00px;"><span class="c2">說明</span><span style="letter-spacing:0.114px">(H)</span></div>
<div class="t" style="top:24.19px;height:15px;line-height:15px;font-size:11px;color:#3a3a3a;left:213.00px;font-weight:bold;">?</div>
<div class="t" style="top:63.34px;height:17px;line-height:17px;font-size:12px;color:#fff;left:21.30px;">多檢視瀏覽器</div>
<div class="t" style="top:92.84px;height:17px;line-height:17px;font-size:12px;color:#fff;left:25.60px;"><span style="letter-spacing:-0.097px">new_Controller_0</span></div>
<div class="t" style="top:63.64px;height:17px;line-height:17px;font-size:12px;color:#fff;left:246.00px;">轴控全</div>
<div class="t" style="top:87.34px;height:17px;line-height:17px;font-size:12px;color:#fff;left:247.00px;"><span class="c3">變數</span></div>
<div class="t c2" style="left:227.4px;top:126px;width:12px;height:12px;line-height:12px;font-size:12px;color:#e6e6e6;transform:rotate(90deg)">行</div>
<div class="t c2" style="left:227.4px;top:138px;width:12px;height:12px;line-height:12px;font-size:12px;color:#e6e6e6;transform:rotate(90deg)">註</div>
<div class="t c2" style="left:227.4px;top:150px;width:12px;height:12px;line-height:12px;font-size:12px;color:#e6e6e6;transform:rotate(90deg)">解</div>
<div class="t c2" style="left:227.4px;top:162px;width:12px;height:12px;line-height:12px;font-size:12px;color:#e6e6e6;transform:rotate(90deg)">列</div>
<div class="t c2" style="left:227.4px;top:174px;width:12px;height:12px;line-height:12px;font-size:12px;color:#e6e6e6;transform:rotate(90deg)">表</div>
<div class="t" style="top:108.39px;height:15px;line-height:15px;font-size:11px;color:#0a0a0a;left:261.60px;"><span class="x" style="width:5.69px;transform:scaleX(0.9300)">0</span></div>
<div class="t" style="top:275.39px;height:15px;line-height:15px;font-size:11px;color:#0a0a0a;left:261.60px;"><span class="x" style="width:5.69px;transform:scaleX(0.9300)">1</span></div>
<div class="t" style="top:335.89px;height:15px;line-height:15px;font-size:11px;color:#0a0a0a;left:261.60px;"><span class="x" style="width:5.69px;transform:scaleX(0.9300)">2</span></div>
<div class="t" style="top:384.39px;height:15px;line-height:15px;font-size:11px;color:#0a0a0a;left:261.20px;"><span class="x" style="width:5.69px;transform:scaleX(0.9300)">3</span></div>
<div class="t" style="top:145.69px;height:15px;line-height:15px;font-size:11px;color:#aa1e96;left:310.40px;"><span class="x" style="width:6.50px;transform:scaleX(0.8859)">A</span>急停</div>
<div class="t" style="top:145.69px;height:15px;line-height:15px;font-size:11px;color:#0a0a0a;left:346.90px;"><span class="x" style="width:10.68px;transform:scaleX(0.7597)">FB</span>轴控<span class="x" style="width:2.32px;transform:scaleX(0.7597)">.</span>使能屏蔽</div>
<div class="t" style="top:145.69px;height:15px;line-height:15px;font-size:11px;color:#0a0a0a;left:434.20px;">轴<span style="letter-spacing:-0.406px">.DrvStatus.Ready</span></div>
<div class="t" style="top:177.39px;height:15px;line-height:15px;font-size:11px;color:#388a3a;left:447.20px;">伺服待机状态</div>
<div class="t" style="top:132.89px;height:15px;line-height:15px;font-size:11px;color:#0a0a0a;left:590.85px;"><span class="x" style="width:15.50px;transform:scaleX(0.8177)">T01</span></div>
<div class="t" style="top:148.39px;height:15px;line-height:15px;font-size:11px;color:#0a0a0a;left:588.75px;"><span style="letter-spacing:-0.640px">TON</span></div>
<div class="t" style="top:162.39px;height:15px;line-height:15px;font-size:11px;color:#0a0a0a;left:582.40px;"><span class="x" style="width:8.53px;transform:scaleX(0.9300)">In</span></div>
<div class="t" style="top:162.39px;height:15px;line-height:15px;font-size:11px;color:#0a0a0a;left:608.64px;"><span class="x" style="width:7.96px;transform:scaleX(0.9300)">Q</span></div>
<div class="t" style="top:188.39px;height:15px;line-height:15px;font-size:11px;color:#0a0a0a;left:582.40px;"><span class="x" style="width:13.07px;transform:scaleX(0.9300)">PT</span></div>
<div class="t" style="top:188.39px;height:15px;line-height:15px;font-size:11px;color:#0a0a0a;left:602.83px;"><span class="x" style="width:13.07px;transform:scaleX(0.9300)">ET</span></div>
<div class="t" style="top:188.39px;height:15px;line-height:15px;font-size:11px;color:#0a0a0a;left:531.20px;"><span style="letter-spacing:-0.456px">T#20ms</span></div>
<div class="t" style="top:188.39px;height:15px;line-height:15px;font-size:11px;color:#9a9a9a;left:631.30px;font-style:italic;">輸入變數</div>
<div class="t" style="top:107.69px;height:15px;line-height:15px;font-size:11px;color:#0a0a0a;left:778.60px;">轴使能</div>
<div class="t" style="top:122.39px;height:15px;line-height:15px;font-size:11px;color:#0a0a0a;left:769.15px;"><span style="letter-spacing:-0.388px">MC_Power</span></div>
<div class="t" style="top:135.89px;height:15px;line-height:15px;font-size:11px;color:#0a0a0a;left:739.60px;"><span style="letter-spacing:-0.364px">Axis</span></div>
<div class="t" style="top:135.89px;height:15px;line-height:15px;font-size:11px;color:#0a0a0a;left:830.87px;"><span style="letter-spacing:-0.364px">Axis</span></div>
<div class="t" style="top:162.09px;height:15px;line-height:15px;font-size:11px;color:#0a0a0a;left:739.60px;"><span style="letter-spacing:-0.400px">Enable</span></div>
<div class="t" style="top:162.09px;height:15px;line-height:15px;font-size:11px;color:#0a0a0a;left:821.20px;"><span style="letter-spacing:-0.364px">Status</span></div>
<div class="t" style="top:187.89px;height:15px;line-height:15px;font-size:11px;color:#0a0a0a;left:827.46px;"><span style="letter-spacing:-0.428px">Busy</span></div>
<div class="t" style="top:213.89px;height:15px;line-height:15px;font-size:11px;color:#0a0a0a;left:827.47px;"><span style="letter-spacing:-0.342px">Error</span></div>
<div class="t" style="top:239.89px;height:15px;line-height:15px;font-size:11px;color:#0a0a0a;left:817.24px;"><span style="letter-spacing:-0.354px">ErrorID</span></div>
<div class="t" style="top:135.69px;height:15px;line-height:15px;font-size:11px;color:#0a0a0a;left:715.60px;">轴</div>
<div class="t" style="top:135.69px;height:15px;line-height:15px;font-size:11px;color:#0a0a0a;left:864.90px;">轴</div>
<div class="t" style="top:188.09px;height:15px;line-height:15px;font-size:11px;color:#9a9a9a;left:865.60px;font-style:italic;">輸入變數</div>
<div class="t" style="top:214.19px;height:15px;line-height:15px;font-size:11px;color:#0a0a0a;left:864.90px;"><span class="x" style="width:11.95px;transform:scaleX(0.8500)">FB</span>轴控<span class="x" style="width:2.60px;transform:scaleX(0.8500)">.</span></div>
<div class="t" style="top:239.89px;height:15px;line-height:15px;font-size:11px;color:#0a0a0a;left:864.90px;"><span class="x" style="width:11.95px;transform:scaleX(0.8500)">FB</span>轴控<span class="x" style="width:2.60px;transform:scaleX(0.8500)">.</span></div>
<div class="t" style="top:273.39px;height:15px;line-height:15px;font-size:11px;color:#0a0a0a;left:310.10px;"><span class="x" style="width:12.63px;transform:scaleX(0.8985)">FB</span>轴控<span class="x" style="width:2.75px;transform:scaleX(0.8985)">.</span>伺服<span class="x" style="width:14.82px;transform:scaleX(0.8985)">ON</span></div>
<div class="t" style="top:273.39px;height:15px;line-height:15px;font-size:11px;color:#0a0a0a;left:392.80px;">轴<span style="letter-spacing:-0.296px">.Status.Standstill</span></div>
<div class="t" style="top:273.39px;height:15px;line-height:15px;font-size:11px;color:#0a0a0a;left:489.10px;">轴<span style="letter-spacing:-0.267px">.Details.Idle</span></div>
<div class="t" style="top:273.39px;height:15px;line-height:15px;font-size:11px;color:#0a0a0a;left:562.80px;">轴<span style="letter-spacing:-0.253px">.Status.Continuous</span></div>
<div class="t" style="top:273.39px;height:15px;line-height:15px;font-size:11px;color:#0a0a0a;left:671.30px;">轴<span style="letter-spacing:-0.279px">.MFaultLvl.Active</span></div>
<div class="t" style="top:273.39px;height:15px;line-height:15px;font-size:11px;color:#0a0a0a;left:769.50px;"><span class="x" style="width:10.02px;transform:scaleX(0.7129)">FB</span>轴控<span class="x" style="width:2.18px;transform:scaleX(0.7129)">.</span>轴运行条件</div>
<div class="t" style="top:306.39px;height:15px;line-height:15px;font-size:11px;color:#388a3a;left:505.80px;">轴停止</div>
<div class="t" style="top:306.39px;height:15px;line-height:15px;font-size:11px;color:#388a3a;left:597.30px;">运行中</div>
<div class="t" style="top:306.39px;height:15px;line-height:15px;font-size:11px;color:#388a3a;left:694.60px;">轴报警中</div>
<div class="t" style="top:306.39px;height:15px;line-height:15px;font-size:11px;color:#388a3a;left:775.20px;">其它因素条件<span class="x" style="width:2.40px;transform:scaleX(0.6552)">(</span>外</div>
<div class="t" style="top:319.39px;height:15px;line-height:15px;font-size:11px;color:#388a3a;left:775.20px;">部<span class="x" style="width:2.60px;transform:scaleX(0.7098)">)</span></div>
<div class="t" style="top:334.59px;height:15px;line-height:15px;font-size:11px;color:#0a0a0a;left:310.60px;">轴运行条件</div>
<div class="t" style="top:334.59px;height:15px;line-height:15px;font-size:11px;color:#0a0a0a;left:372.40px;"><span class="x" style="width:10.27px;transform:scaleX(0.7305)">FB</span>轴控<span class="x" style="width:2.23px;transform:scaleX(0.7305)">.</span>轴回原完成标志</div>
<div class="t" style="top:382.99px;height:15px;line-height:15px;font-size:11px;color:#0a0a0a;left:310.60px;">轴运行条件</div>
<div class="t" style="top:421.19px;height:15px;line-height:15px;font-size:11px;color:#0a0a0a;left:391.90px;"><span class="x" style="width:10.84px;transform:scaleX(0.7714)">FB</span>轴控<span class="x" style="width:2.36px;transform:scaleX(0.7714)">.</span>正向点动</div>
<div class="t" style="top:421.19px;height:15px;line-height:15px;font-size:11px;color:#0a0a0a;left:479.80px;">手动模式</div>
<div class="t" style="top:421.19px;height:15px;line-height:15px;font-size:11px;color:#0a0a0a;left:531.00px;"><span class="x" style="width:10.35px;transform:scaleX(0.7363)">FB</span>轴控<span class="x" style="width:2.25px;transform:scaleX(0.7363)">.</span>反向点动</div>
<div class="t" style="top:382.99px;height:15px;line-height:15px;font-size:11px;color:#0a0a0a;left:766.00px;">轴<span class="x" style="width:18.60px;transform:scaleX(0.8226)">JOG</span></div>
<div class="t" style="top:398.19px;height:15px;line-height:15px;font-size:11px;color:#0a0a0a;left:747.95px;"><span style="letter-spacing:-0.256px">MC_MoveJog</span></div>
<div class="t" style="top:411.69px;height:15px;line-height:15px;font-size:11px;color:#0a0a0a;left:695.20px;"><span style="letter-spacing:-0.364px">Axis</span></div>
<div class="t" style="top:411.69px;height:15px;line-height:15px;font-size:11px;color:#0a0a0a;left:847.47px;"><span style="letter-spacing:-0.364px">Axis</span></div>
<div class="t" style="top:437.89px;height:15px;line-height:15px;font-size:11px;color:#0a0a0a;left:695.20px;"><span style="letter-spacing:-0.255px">PositiveEnable</span></div>
<div class="t" style="top:437.89px;height:15px;line-height:15px;font-size:11px;color:#0a0a0a;left:844.06px;"><span style="letter-spacing:-0.428px">Busy</span></div>
<div class="t" style="top:463.99px;height:15px;line-height:15px;font-size:11px;color:#0a0a0a;left:695.20px;"><span style="letter-spacing:-0.176px">NegativeEnable</span></div>
<div class="t" style="top:463.99px;height:15px;line-height:15px;font-size:11px;color:#0a0a0a;left:776.40px;"><span style="letter-spacing:0.081px">CommandAborted</span></div>
<div class="t" style="top:411.89px;height:15px;line-height:15px;font-size:11px;color:#0a0a0a;left:671.60px;">轴</div>
<div class="t" style="top:464.39px;height:15px;line-height:15px;font-size:11px;color:#0a0a0a;left:615.60px;">反向点动辅助</div>
<div class="t" style="top:411.89px;height:15px;line-height:15px;font-size:11px;color:#0a0a0a;left:880.60px;">轴</div>
<div class="t" style="top:464.39px;height:15px;line-height:15px;font-size:11px;color:#9a9a9a;left:880.60px;font-style:italic;">輸入</div>
<div class="t" style="top:510.34px;height:17px;line-height:17px;font-size:12px;color:#fff;left:227.60px;"><span class="c3">編譯</span></div>
<div class="t" style="top:531.04px;height:17px;line-height:17px;font-size:12px;color:#1c4fae;left:247.20px;">0</div>
<div class="t" style="top:531.04px;height:17px;line-height:17px;font-size:12px;color:#1c4fae;left:261.40px;">錯誤</div>
<div class="t" style="top:531.04px;height:17px;line-height:17px;font-size:12px;color:#1c4fae;left:316.80px;">0</div>
<div class="t" style="top:531.04px;height:17px;line-height:17px;font-size:12px;color:#1c4fae;left:331.00px;">警告</div>
<div class="t" style="top:550.34px;height:17px;line-height:17px;font-size:12px;color:#fff;left:368.80px;"><span class="c2">說明</span></div>
<div class="t" style="top:550.34px;height:17px;line-height:17px;font-size:12px;color:#fff;left:518.30px;"><span class="c2">程式</span></div>
<div class="t" style="top:550.34px;height:17px;line-height:17px;font-size:12px;color:#fff;left:642.80px;"><span class="c2">位置</span></div>
</div>
</body></html>
